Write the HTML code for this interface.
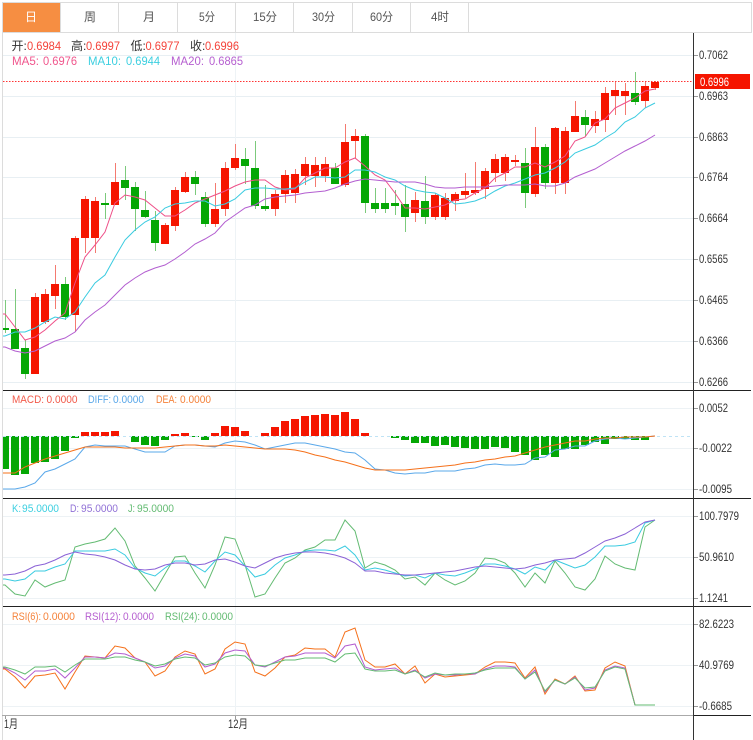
<!DOCTYPE html>
<html><head><meta charset="utf-8"><title>K</title>
<style>
html,body{margin:0;padding:0;background:#fff;width:753px;height:740px;overflow:hidden}
svg{display:block}
text{font-family:"Liberation Sans","Noto Sans CJK SC",sans-serif;font-size:12px}
.t text{font-size:11px}
.a text{fill:#333}
.l{fill:none;stroke-width:1}
</style></head><body>
<svg width="753" height="740" viewBox="0 0 753 740" xmlns="http://www.w3.org/2000/svg">
<rect width="753" height="740" fill="#fff"/>
<!-- tabs -->
<rect x="3" y="3" width="57" height="29" fill="#f68e42"/>
<path d="M2 2.5H751.5V32.5H2.5M60.5 3V32M118.5 3V32M177.5 3V32M235.5 3V32M293.5 3V32M352.5 3V32M410.5 3V32M468.5 3V32M2.5 2V740" fill="none" stroke="#dcdcdc"/>
<g fill="#555">
<text x="25" y="21" fill="#fff">日</text><text x="84" y="21">周</text><text x="143" y="21">月</text>
<text x="199" y="21" textLength="16" lengthAdjust="spacingAndGlyphs">5分</text>
<text x="253" y="21" textLength="24" lengthAdjust="spacingAndGlyphs">15分</text>
<text x="312" y="21" textLength="23" lengthAdjust="spacingAndGlyphs">30分</text>
<text x="370" y="21" textLength="23" lengthAdjust="spacingAndGlyphs">60分</text>
<text x="431" y="21" textLength="18" lengthAdjust="spacingAndGlyphs">4时</text>
</g>
<!-- grid -->
<path d="M3 55.5H693M3 96.5H693M3 137.5H693M3 177.5H693M3 218.5H693M3 259.5H693M3 300.5H693M3 341.5H693M3 382.5H693" stroke="#e8eff3" fill="none"/>
<path d="M3 408.5H693M3 448.5H693M3 489.5H693M3 516.5H693M3 557.5H693M3 598.5H693M3 624.5H693M3 665.5H693M3 706.5H693" stroke="#edf2f5" fill="none"/>
<path d="M235.5 33V715" stroke="#eef3f6" fill="none"/>
<!-- wicks -->
<path stroke="#f47a70" fill="none" d="M35.5 293V374M45.5 289V324M55.5 265V309M75.5 236V332M85.5 196V253M95.5 197V253M115.5 163V205M165.5 223V244M175.5 187V231M185.5 172V193M215.5 183V227M225.5 162V216M235.5 144V170M275.5 190V216M285.5 170V203M295.5 169V203M305.5 157V185M315.5 157V187M325.5 157V182M345.5 124V187M355.5 129V158M415.5 192V222M435.5 193V220M445.5 193V220M455.5 192V211M465.5 173V198M475.5 162V195M485.5 168V199M495.5 154V182M505.5 154V181M515.5 155V166M535.5 127V197M555.5 127V194M565.5 127V194M575.5 101V132M595.5 111V133M605.5 87V132M615.5 82V115M625.5 83V115M645.5 81V108M655.5 81V90"/>
<path stroke="#7cca7c" fill="none" d="M5.5 300V333M15.5 289V349M25.5 340V379M65.5 277V320M105.5 193V219M125.5 166V200M135.5 182V231M145.5 191V218M155.5 211V251M195.5 171V195M205.5 192V227M245.5 148V184M255.5 141V209M265.5 185V211M335.5 163V184M365.5 134V213M375.5 188V213M385.5 188V213M395.5 190V215M405.5 185V232M425.5 176V224M525.5 148V208M545.5 144V189M585.5 110V136M635.5 72V105"/>
<!-- bodies -->
<path fill="#f51500" d="M31 297h8v77h-8zM41 294h8v28h-8zM51 284h8v12h-8zM71 238h8v77h-8zM81 199h8v39h-8zM91 201h8v37h-8zM111 182h8v23h-8zM161 225h8v19h-8zM171 190h8v36h-8zM181 177h8v15h-8zM211 209h8v15h-8zM221 168h8v41h-8zM231 158h8v10h-8zM271 194h8v15h-8zM281 175h8v19h-8zM291 174h8v19h-8zM301 164h8v12h-8zM311 165h8v11h-8zM321 164h8v12h-8zM341 142h8v43h-8zM351 136h8v5h-8zM411 200h8v13h-8zM431 195h8v22h-8zM441 198h8v19h-8zM451 194h8v7h-8zM461 191h8v4h-8zM471 190h8v3h-8zM481 171h8v18h-8zM491 159h8v14h-8zM501 157h8v16h-8zM511 160h8v2h-8zM531 147h8v47h-8zM551 128h8v55h-8zM561 131h8v52h-8zM571 116h8v16h-8zM591 119h8v7h-8zM601 93h8v27h-8zM611 90h8v6h-8zM621 91h8v5h-8zM641 86h8v15h-8zM651 82h8v6h-8z"/>
<path fill="#05a705" d="M3 328h6v2h-6zM11 329h8v20h-8zM21 348h8v26h-8zM61 284h8v33h-8zM101 203h8v2h-8zM121 180h8v8h-8zM131 187h8v22h-8zM141 210h8v7h-8zM151 220h8v23h-8zM191 177h8v7h-8zM201 197h8v27h-8zM241 159h8v7h-8zM251 168h8v38h-8zM261 206h8v3h-8zM331 168h8v16h-8zM361 136h8v67h-8zM371 203h8v6h-8zM381 203h8v6h-8zM391 203h8v3h-8zM401 204h8v13h-8zM421 201h8v16h-8zM521 163h8v30h-8zM541 147h8v36h-8zM581 117h8v8h-8zM631 93h8v9h-8z"/>
<!-- MA -->
<polyline class="l" stroke="#ee4f88" points="3,314 5,314 15,327 25,340 35,337 45,330 55,321 65,313 75,283 85,257 95,245 105,232 115,203 125,195 135,197 145,200 155,208 165,216 175,216 185,210 195,203 205,199 215,195 225,191 235,186 245,182 255,180 265,180 275,187 285,190 295,189 305,178 315,173 325,168 335,168 345,162 355,158 365,166 375,175 385,180 395,193 405,208 415,208 425,209 435,207 445,205 455,200 465,199 475,193 485,188 495,178 505,173 515,167 525,167 535,163 545,167 555,162 565,156 575,141 585,137 595,123 605,119 615,108 625,103 635,98 645,91 655,89"/>
<polyline class="l" stroke="#3acbe0" points="3,336 5,336 15,332 25,332 35,328 45,322 55,317 65,319 75,312 85,297 95,283 105,275 115,257 125,240 135,230 145,222 155,217 165,208 175,204 185,203 195,201 205,201 215,206 225,204 235,199 245,190 255,188 265,188 275,189 285,189 295,188 305,182 315,177 325,177 335,178 345,177 355,170 365,170 375,172 385,177 395,180 405,186 415,190 425,192 435,193 445,198 455,204 465,203 475,201 485,197 495,191 505,186 515,183 525,179 535,175 545,173 555,168 565,162 575,153 585,149 595,145 605,138 615,132 625,122 635,117 645,108 655,103"/>
<polyline class="l" stroke="#b35ed0" points="3,347 5,347 15,351 25,353 35,351 45,346 55,341 65,338 75,332 85,320 95,312 105,305 115,295 125,285 135,278 145,272 155,268 165,265 175,259 185,252 195,244 205,239 215,233 225,222 235,215 245,208 255,205 265,199 275,197 285,196 295,195 305,193 315,192 325,191 335,188 345,184 355,181 365,179 375,180 385,181 395,182 405,182 415,182 425,184 435,187 445,188 455,188 465,187 475,187 485,187 495,186 505,185 515,185 525,185 535,184 545,186 555,186 565,183 575,177 585,173 595,169 605,163 615,157 625,151 635,146 645,141 655,135"/>
<!-- current price -->
<path d="M3 81.5H693" stroke="#f33" stroke-dasharray="1.5 1.5" fill="none"/>
<!-- MACD -->
<path fill="#05a705" d="M3 436h6v33h-6zM11 436h8v39h-8zM21 436h8v38h-8zM31 436h8v27h-8zM41 436h8v26h-8zM51 436h8v23h-8zM61 436h8v15h-8zM71 436h8v2h-8zM131 436h8v6h-8zM141 436h8v9h-8zM151 436h8v10h-8zM161 436h8v4h-8zM191 436h8v1h-8zM201 436h8v4h-8zM391 436h8v2h-8zM401 436h8v4h-8zM411 436h8v7h-8zM421 436h8v7h-8zM431 436h8v10h-8zM441 436h8v9h-8zM451 436h8v11h-8zM461 436h8v12h-8zM471 436h8v13h-8zM481 436h8v13h-8zM491 436h8v11h-8zM501 436h8v12h-8zM511 436h8v16h-8zM521 436h8v19h-8zM531 436h8v24h-8zM541 436h8v19h-8zM551 436h8v21h-8zM561 436h8v13h-8zM571 436h8v13h-8zM581 436h8v9h-8zM591 436h8v6h-8zM601 436h8v8h-8zM611 436h8v3h-8zM621 436h8v3h-8zM631 436h8v4h-8zM641 436h8v4h-8z"/>
<path fill="#f51500" d="M81 432h8v4h-8zM91 432h8v4h-8zM101 432h8v4h-8zM111 431h8v5h-8zM171 434h8v2h-8zM181 433h8v3h-8zM211 433h8v3h-8zM221 426h8v10h-8zM231 427h8v9h-8zM241 431h8v5h-8zM261 433h8v3h-8zM271 427h8v9h-8zM281 421h8v15h-8zM291 419h8v17h-8zM301 416h8v20h-8zM311 415h8v21h-8zM321 414h8v22h-8zM331 415h8v21h-8zM341 412h8v24h-8zM351 419h8v17h-8zM361 433h8v3h-8z"/>
<path d="M3 436.5H693" stroke="#bfe3f5" stroke-dasharray="3 3" fill="none"/>
<polyline class="l" stroke="#5aa8ea" points="3,489 5,489 15,489 25,487 35,483 45,472 55,469 65,464 75,459 85,447 95,445 105,446 115,446 125,446 135,449 145,452 155,452 165,452 175,446 185,445 195,445 205,446 215,447 225,443 235,441 245,442 255,445 265,449 275,447 285,445 295,443 305,443 315,445 325,447 335,449 345,452 355,453 365,460 375,469 385,470 395,473 405,474 415,473 425,473 435,471 445,471 455,471 465,469 475,468 485,465 495,464 505,465 515,465 525,464 535,458 545,457 555,450 565,449 575,446 585,446 595,441 605,439 615,438 625,439 635,438 645,437 655,436"/>
<polyline class="l" stroke="#f5701a" points="3,473 5,473 15,473 25,467 35,463 45,459 55,456 65,453 75,450 85,447 95,447 105,447 115,447 125,448 135,448 145,448 155,448 165,447 175,446 185,445 195,445 205,446 215,446 225,445 235,446 245,447 255,448 265,449 275,449 285,449 295,450 305,452 315,455 325,457 335,460 345,462 355,465 365,468 375,470 385,470 395,470 405,470 415,469 425,468 435,467 445,466 455,465 465,463 475,462 485,460 495,459 505,457 515,456 525,453 535,450 545,447 555,445 565,443 575,441 585,441 595,439 605,438 615,438 625,437 635,437 645,437 655,436"/>
<!-- KDJ -->
<polyline class="l" stroke="#63bb72" points="3,585 5,585 15,594 25,596 35,580 45,587 55,583 65,580 75,547 85,544 95,542 105,539 115,528 125,541 135,566 145,578 155,591 165,574 175,557 185,556 195,573 205,588 215,565 225,537 235,539 245,565 255,597 265,594 275,578 285,563 295,558 305,550 315,547 325,540 335,540 345,520 355,531 365,568 375,562 385,565 395,570 405,579 415,577 425,585 435,573 445,580 455,585 465,581 475,573 485,558 495,559 505,563 515,573 525,587 535,573 545,583 555,561 565,573 575,587 585,590 595,579 605,556 615,564 625,568 635,570 645,527 655,520"/>
<polyline class="l" stroke="#3acbe0" points="3,579 5,579 15,581 25,579 35,571 45,571 55,567 65,564 75,551 85,551 95,551 105,551 115,549 125,555 135,568 145,573 155,576 165,568 175,561 185,561 195,566 205,572 215,561 225,552 235,555 245,566 255,577 265,574 275,565 285,558 295,555 305,551 315,550 325,550 335,551 345,546 355,555 365,570 375,568 385,570 395,573 405,576 415,575 425,578 435,573 445,575 455,576 465,573 475,569 485,564 495,564 505,566 515,569 525,574 535,567 545,570 555,560 565,564 575,568 585,565 595,557 605,546 615,546 625,545 635,542 645,523 655,520"/>
<polyline class="l" stroke="#8b62d6" points="3,575 5,575 15,574 25,571 35,566 45,564 55,560 65,555 75,552 85,554 95,555 105,557 115,560 125,565 135,569 145,570 155,569 165,565 175,563 185,563 195,565 205,564 215,560 225,559 235,562 245,566 255,568 265,563 275,558 285,555 295,553 305,552 315,552 325,553 335,555 345,558 355,563 365,571 375,571 385,573 395,574 405,575 415,575 425,574 435,573 445,572 455,571 465,569 475,567 485,566 495,567 505,568 515,569 525,568 535,565 545,563 555,560 565,559 575,558 585,553 595,547 605,541 615,538 625,534 635,528 645,522 655,520"/>
<!-- RSI -->
<polyline class="l" stroke="#f5701a" points="3,669 5,669 15,677 25,688 35,676 45,675 55,673 65,689 75,672 85,656 95,657 105,658 115,646 125,648 135,658 145,662 155,676 165,671 175,657 185,651 195,654 205,674 215,669 225,649 235,642 245,644 255,672 265,676 275,668 285,657 295,655 305,648 315,649 325,649 335,657 345,632 355,628 365,660 375,667 385,667 395,664 405,674 415,666 425,683 435,674 445,677 455,676 465,675 475,674 485,667 495,662 505,662 515,663 525,678 535,667 545,694 555,679 565,684 575,676 585,691 595,690 605,668 615,662 625,666 635,705 645,705 655,705"/>
<polyline class="l" stroke="#b35ed0" points="3,668 5,668 15,673 25,680 35,671 45,671 55,669 65,678 75,668 85,657 95,657 105,658 115,653 125,654 135,658 145,662 155,668 165,666 175,658 185,654 195,656 205,667 215,664 225,653 235,650 245,651 255,665 265,667 275,662 285,657 295,656 305,653 315,653 325,653 335,658 345,646 355,644 365,667 375,670 385,669 395,668 405,674 415,670 425,678 435,674 445,675 455,675 465,674 475,674 485,669 495,666 505,666 515,667 525,679 535,670 545,692 555,680 565,684 575,677 585,690 595,688 605,670 615,666 625,668 635,705 645,705 655,705"/>
<polyline class="l" stroke="#63bb72" points="3,667 5,667 15,670 25,674 35,667 45,667 55,666 65,672 75,665 85,659 95,659 105,659 115,657 125,657 135,660 145,662 155,666 165,664 175,659 185,657 195,658 205,665 215,663 225,657 235,655 245,656 255,665 265,666 275,663 285,660 295,660 305,658 315,658 325,658 335,662 345,654 355,653 365,669 375,671 385,671 395,670 405,674 415,671 425,677 435,673 445,675 455,674 465,674 475,673 485,670 495,668 505,668 515,668 525,679 535,672 545,691 555,680 565,684 575,678 585,688 595,687 605,671 615,667 625,669 635,705 645,705 655,705"/>
<!-- axes -->
<path d="M2 715.5H693" stroke="#aaa" fill="none"/>
<path d="M3 390.5H751M3 498.5H751M3 606.5H751M693 715.5H751" stroke="#222" fill="none"/>
<path d="M693.5 33V740" stroke="#333" fill="none"/>
<path d="M5.5 716V719M235.5 716V719M694 55.5h4M694 96.5h4M694 137.5h4M694 177.5h4M694 218.5h4M694 259.5h4M694 300.5h4M694 341.5h4M694 382.5h4M694 408.5h4M694 448.5h4M694 489.5h4M694 516.5h4M694 557.5h4M694 598.5h4M694 624.5h4M694 665.5h4M694 706.5h4" stroke="#999" fill="none"/>
<g class="a">
<text x="699" y="59" textLength="29" lengthAdjust="spacingAndGlyphs">0.7062</text><text x="699" y="100" textLength="29" lengthAdjust="spacingAndGlyphs">0.6963</text><text x="699" y="141" textLength="29" lengthAdjust="spacingAndGlyphs">0.6863</text><text x="699" y="181" textLength="29" lengthAdjust="spacingAndGlyphs">0.6764</text><text x="699" y="222" textLength="29" lengthAdjust="spacingAndGlyphs">0.6664</text><text x="699" y="263" textLength="29" lengthAdjust="spacingAndGlyphs">0.6565</text><text x="699" y="304" textLength="29" lengthAdjust="spacingAndGlyphs">0.6465</text><text x="699" y="345" textLength="29" lengthAdjust="spacingAndGlyphs">0.6366</text><text x="699" y="386" textLength="29" lengthAdjust="spacingAndGlyphs">0.6266</text>
<text x="699" y="412" textLength="29" lengthAdjust="spacingAndGlyphs">0.0052</text><text x="699" y="452" textLength="33" lengthAdjust="spacingAndGlyphs">-0.0022</text><text x="699" y="493" textLength="33" lengthAdjust="spacingAndGlyphs">-0.0095</text>
<text x="699" y="520" textLength="40" lengthAdjust="spacingAndGlyphs">100.7979</text><text x="699" y="561" textLength="35" lengthAdjust="spacingAndGlyphs">50.9610</text><text x="699" y="602" textLength="29" lengthAdjust="spacingAndGlyphs">1.1241</text>
<text x="699" y="628" textLength="35" lengthAdjust="spacingAndGlyphs">82.6223</text><text x="699" y="669" textLength="35" lengthAdjust="spacingAndGlyphs">40.9769</text><text x="699" y="710" textLength="33" lengthAdjust="spacingAndGlyphs">-0.6685</text>
<text x="4" y="728" textLength="14" lengthAdjust="spacingAndGlyphs">1月</text><text x="228" y="728" textLength="20" lengthAdjust="spacingAndGlyphs">12月</text>
</g>
<rect x="695" y="74" width="55" height="15" fill="#f51500"/>
<text x="700" y="86" fill="#fff" textLength="29" lengthAdjust="spacingAndGlyphs">0.6996</text>
<!-- legends -->
<g fill="#333">
<text x="11.5" y="50">开:</text><text x="71" y="50">高:</text><text x="130.5" y="50">低:</text><text x="190" y="50">收:</text>
</g>
<g fill="#f4433a">
<text x="27" y="50" textLength="34" lengthAdjust="spacingAndGlyphs">0.6984</text><text x="86" y="50" textLength="34" lengthAdjust="spacingAndGlyphs">0.6997</text><text x="145.5" y="50" textLength="34" lengthAdjust="spacingAndGlyphs">0.6977</text><text x="205" y="50" textLength="34" lengthAdjust="spacingAndGlyphs">0.6996</text>
</g>
<g fill="#f0558c"><text x="12" y="65" textLength="27" lengthAdjust="spacingAndGlyphs">MA5:</text><text x="43" y="65" textLength="34" lengthAdjust="spacingAndGlyphs">0.6976</text></g>
<g fill="#3ccfe0"><text x="88" y="65" textLength="33" lengthAdjust="spacingAndGlyphs">MA10:</text><text x="126" y="65" textLength="34" lengthAdjust="spacingAndGlyphs">0.6944</text></g>
<g fill="#b65fd0"><text x="171" y="65" textLength="33" lengthAdjust="spacingAndGlyphs">MA20:</text><text x="209" y="65" textLength="34" lengthAdjust="spacingAndGlyphs">0.6865</text></g>
<g class="t">
<g fill="#f25a4a"><text x="12" y="403" textLength="32" lengthAdjust="spacingAndGlyphs">MACD:</text><text x="46.5" y="403" textLength="31" lengthAdjust="spacingAndGlyphs">0.0000</text></g>
<g fill="#5aa8ea"><text x="88" y="403" textLength="23" lengthAdjust="spacingAndGlyphs">DIFF:</text><text x="113" y="403" textLength="31" lengthAdjust="spacingAndGlyphs">0.0000</text></g>
<g fill="#f5823a"><text x="156" y="403" textLength="21" lengthAdjust="spacingAndGlyphs">DEA:</text><text x="180" y="403" textLength="31" lengthAdjust="spacingAndGlyphs">0.0000</text></g>
<g fill="#3ccfe0"><text x="12" y="512" textLength="9" lengthAdjust="spacingAndGlyphs">K:</text><text x="22" y="512" textLength="37" lengthAdjust="spacingAndGlyphs">95.0000</text></g>
<g fill="#9070d6"><text x="70" y="512" textLength="9" lengthAdjust="spacingAndGlyphs">D:</text><text x="81" y="512" textLength="37" lengthAdjust="spacingAndGlyphs">95.0000</text></g>
<g fill="#63bb72"><text x="128" y="512" textLength="7" lengthAdjust="spacingAndGlyphs">J:</text><text x="137" y="512" textLength="37" lengthAdjust="spacingAndGlyphs">95.0000</text></g>
<g fill="#f5823a"><text x="12" y="620" textLength="29" lengthAdjust="spacingAndGlyphs">RSI(6):</text><text x="43" y="620" textLength="32" lengthAdjust="spacingAndGlyphs">0.0000</text></g>
<g fill="#b65fd0"><text x="85" y="620" textLength="36" lengthAdjust="spacingAndGlyphs">RSI(12):</text><text x="123" y="620" textLength="31" lengthAdjust="spacingAndGlyphs">0.0000</text></g>
<g fill="#63bb72"><text x="165" y="620" textLength="35" lengthAdjust="spacingAndGlyphs">RSI(24):</text><text x="202" y="620" textLength="31" lengthAdjust="spacingAndGlyphs">0.0000</text></g>
</g>
</svg>
</body></html>
